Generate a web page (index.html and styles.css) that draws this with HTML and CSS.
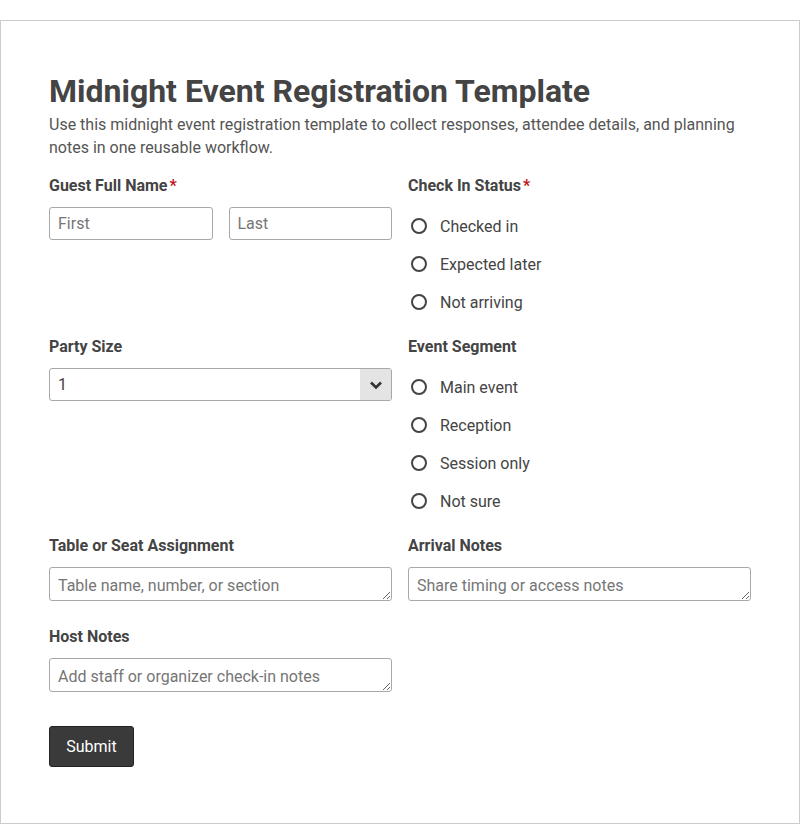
FILE: index.html
```html
<!DOCTYPE html>
<html>
<head>
  <meta charset="utf-8">
  <title>Midnight Event Registration Template</title>
  <link rel="stylesheet" href="styles.css">
</head>
<body>
  <div class="container">
    <h1 class="title">Midnight Event Registration Template</h1>
    <p class="intro">Use this midnight event registration template to collect responses, attendee details, and planning notes in one reusable workflow.</p>

    <form class="form-grid">
      <div class="field">
        <label class="field-label">Guest Full Name<span class="req">*</span></label>
        <div class="name-row">
          <input type="text" class="text-input" placeholder="First">
          <input type="text" class="text-input" placeholder="Last">
        </div>
      </div>

      <div class="field">
        <label class="field-label">Check In Status<span class="req">*</span></label>
        <div class="options">
          <label class="option"><input type="radio" name="status"> Checked in</label>
          <label class="option"><input type="radio" name="status"> Expected later</label>
          <label class="option"><input type="radio" name="status"> Not arriving</label>
        </div>
      </div>

      <div class="field">
        <label class="field-label">Party Size</label>
        <div class="select-wrap">
          <select class="select">
            <option>1</option>
            <option>2</option>
            <option>3</option>
            <option>4</option>
            <option>5+</option>
          </select>
          <span class="select-arrow">
            <svg width="14" height="10" viewBox="0 0 14 10"><path d="M2 2.5 L7 7.5 L12 2.5" fill="none" stroke="#333" stroke-width="2.6"/></svg>
          </span>
        </div>
      </div>

      <div class="field">
        <label class="field-label">Event Segment</label>
        <div class="options">
          <label class="option"><input type="radio" name="segment"> Main event</label>
          <label class="option"><input type="radio" name="segment"> Reception</label>
          <label class="option"><input type="radio" name="segment"> Session only</label>
          <label class="option"><input type="radio" name="segment"> Not sure</label>
        </div>
      </div>

      <div class="field">
        <label class="field-label">Table or Seat Assignment</label>
        <textarea class="textarea" placeholder="Table name, number, or section"></textarea>
      </div>

      <div class="field">
        <label class="field-label">Arrival Notes</label>
        <textarea class="textarea" placeholder="Share timing or access notes"></textarea>
      </div>

      <div class="field">
        <label class="field-label">Host Notes</label>
        <textarea class="textarea" placeholder="Add staff or organizer check-in notes"></textarea>
      </div>
    </form>

    <button type="button" class="submit">Submit</button>
  </div>
</body>
</html>
```

FILE: styles.css
```css
* {
    padding: 0px;
    margin: 0px;
    box-sizing: border-box;
}

body {
    background-color: #fff;
    font-family: Roboto, "Liberation Sans", Arial, sans-serif;
    color: #444;
    padding-top: 20px;
}

.container {
    width: 800px;
    border: 1px solid #ccc;
    padding: 51px 48px 56px 48px;
}

.title {
    font-size: 32px;
    line-height: 38px;
    font-weight: bold;
    color: #444;
}

.intro {
    font-size: 16px;
    line-height: 23px;
    color: #555;
    margin-top: 3px;
    margin-bottom: 17px;
}

.form-grid {
    display: grid;
    grid-template-columns: minmax(0, 1fr) minmax(0, 1fr);
    column-gap: 16px;
    row-gap: 15px;
}

.field-label {
    display: block;
    font-size: 16px;
    line-height: 20px;
    font-weight: bold;
    color: #444;
    margin-bottom: 11px;
}

.req {
    color: #c0141c;
    margin-left: 2px;
}

.name-row {
    display: flex;
    gap: 16px;
}

.text-input {
    flex: 1;
    min-width: 0;
    height: 33px;
    padding: 0 8px;
    border: 1px solid #a8a8a8;
    border-radius: 3px;
    font-family: inherit;
    font-size: 16px;
    color: #444;
}

.text-input::placeholder,
.textarea::placeholder {
    color: #767676;
}

.options {
    display: flex;
    flex-direction: column;
    padding-bottom: 1px;
}

.option {
    display: flex;
    align-items: center;
    height: 38px;
    font-size: 16px;
    color: #444;
}

.option input[type="radio"] {
    appearance: none;
    -webkit-appearance: none;
    width: 16px;
    height: 16px;
    border: 2px solid #444;
    border-radius: 50%;
    margin: 0 13px 0 3px;
}

.select-wrap {
    position: relative;
}

.select {
    appearance: none;
    -webkit-appearance: none;
    width: 100%;
    height: 33px;
    padding: 0 40px 0 8px;
    border: 1px solid #a8a8a8;
    border-radius: 3px;
    background-color: #fff;
    font-family: inherit;
    font-size: 16px;
    color: #444;
}

.select-arrow {
    position: absolute;
    top: 1px;
    right: 1px;
    width: 31px;
    height: 31px;
    background-color: #e4e4e4;
    border-radius: 0 2px 2px 0;
    display: flex;
    align-items: center;
    justify-content: center;
    pointer-events: none;
}

.textarea {
    display: block;
    width: 100%;
    height: 34px;
    padding: 9px 8px 5px 8px;
    border: 1px solid #a8a8a8;
    border-radius: 3px;
    font-family: inherit;
    font-size: 16px;
    line-height: 18px;
    color: #444;
    margin-bottom: 11px;
}

.submit {
    margin-top: 23px;
    width: 85px;
    height: 41px;
    background-color: #3a3a3a;
    color: #fff;
    border: 1px solid #222;
    border-radius: 3px;
    font-family: inherit;
    font-size: 16px;
    cursor: pointer;
}
```
